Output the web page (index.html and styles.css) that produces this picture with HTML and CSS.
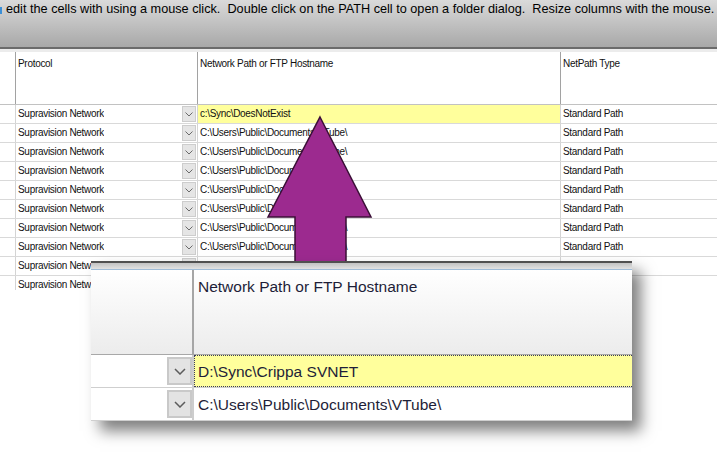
FILE: index.html
```html
<!DOCTYPE html>
<html>
<head>
<meta charset="utf-8">
<link rel="stylesheet" href="styles.css">
</head>
<body>
<div class="banner"><span class="caret"></span><span class="msg">edit the cells with using a mouse click.&nbsp; Double click on the PATH cell to open a folder dialog.&nbsp; Resize columns with the mouse.</span></div>
<div class="rule"></div>
<div class="grid">
  <div class="row head">
    <div class="c c0"></div><div class="c c1">Protocol</div><div class="c c2">Network Path or FTP Hostname</div><div class="c c3">NetPath Type</div>
  </div>
  <div class="row"><div class="c c0"></div><div class="c c1"><span class="t">Supravision Network</span><span class="dd"><svg width="8" height="5" viewBox="0 0 8 5"><path d="M0.5 0.5 L4 4 L7.5 0.5" fill="none" stroke="#6a6a6a" stroke-width="1"/></svg></span></div><div class="c c2 sel">c:\Sync\DoesNotExist</div><div class="c c3">Standard Path</div></div>
  <div class="row"><div class="c c0"></div><div class="c c1"><span class="t">Supravision Network</span><span class="dd"><svg width="8" height="5" viewBox="0 0 8 5"><path d="M0.5 0.5 L4 4 L7.5 0.5" fill="none" stroke="#6a6a6a" stroke-width="1"/></svg></span></div><div class="c c2">C:\Users\Public\Documents\VTube\</div><div class="c c3">Standard Path</div></div>
  <div class="row"><div class="c c0"></div><div class="c c1"><span class="t">Supravision Network</span><span class="dd"><svg width="8" height="5" viewBox="0 0 8 5"><path d="M0.5 0.5 L4 4 L7.5 0.5" fill="none" stroke="#6a6a6a" stroke-width="1"/></svg></span></div><div class="c c2">C:\Users\Public\Documents\VTube\</div><div class="c c3">Standard Path</div></div>
  <div class="row"><div class="c c0"></div><div class="c c1"><span class="t">Supravision Network</span><span class="dd"><svg width="8" height="5" viewBox="0 0 8 5"><path d="M0.5 0.5 L4 4 L7.5 0.5" fill="none" stroke="#6a6a6a" stroke-width="1"/></svg></span></div><div class="c c2">C:\Users\Public\Documents\VTube\</div><div class="c c3">Standard Path</div></div>
  <div class="row"><div class="c c0"></div><div class="c c1"><span class="t">Supravision Network</span><span class="dd"><svg width="8" height="5" viewBox="0 0 8 5"><path d="M0.5 0.5 L4 4 L7.5 0.5" fill="none" stroke="#6a6a6a" stroke-width="1"/></svg></span></div><div class="c c2">C:\Users\Public\Documents\VTube\</div><div class="c c3">Standard Path</div></div>
  <div class="row"><div class="c c0"></div><div class="c c1"><span class="t">Supravision Network</span><span class="dd"><svg width="8" height="5" viewBox="0 0 8 5"><path d="M0.5 0.5 L4 4 L7.5 0.5" fill="none" stroke="#6a6a6a" stroke-width="1"/></svg></span></div><div class="c c2">C:\Users\Public\Documents\VTube\</div><div class="c c3">Standard Path</div></div>
  <div class="row"><div class="c c0"></div><div class="c c1"><span class="t">Supravision Network</span><span class="dd"><svg width="8" height="5" viewBox="0 0 8 5"><path d="M0.5 0.5 L4 4 L7.5 0.5" fill="none" stroke="#6a6a6a" stroke-width="1"/></svg></span></div><div class="c c2">C:\Users\Public\Documents\VTube\</div><div class="c c3">Standard Path</div></div>
  <div class="row"><div class="c c0"></div><div class="c c1"><span class="t">Supravision Network</span><span class="dd"><svg width="8" height="5" viewBox="0 0 8 5"><path d="M0.5 0.5 L4 4 L7.5 0.5" fill="none" stroke="#6a6a6a" stroke-width="1"/></svg></span></div><div class="c c2">C:\Users\Public\Documents\VTube\</div><div class="c c3">Standard Path</div></div>
  <div class="row"><div class="c c0"></div><div class="c c1"><span class="t">Supravision Network</span><span class="dd"><svg width="8" height="5" viewBox="0 0 8 5"><path d="M0.5 0.5 L4 4 L7.5 0.5" fill="none" stroke="#6a6a6a" stroke-width="1"/></svg></span></div><div class="c c2"></div><div class="c c3"></div></div>
  <div class="row"><div class="c c0"></div><div class="c c1"><span class="t">Supravision Network</span><span class="dd"><svg width="8" height="5" viewBox="0 0 8 5"><path d="M0.5 0.5 L4 4 L7.5 0.5" fill="none" stroke="#6a6a6a" stroke-width="1"/></svg></span></div><div class="c c2"></div><div class="c c3"></div></div>
</div>

<svg class="arrow" width="108" height="150" viewBox="0 0 108 150">
  <polygon points="54,2 105,102 80,102 80,148 29,148 29,102 2,102" fill="#9c2a8f" stroke="#3a0f36" stroke-width="1.5" stroke-linejoin="miter"/>
</svg>

<div class="zoom">
  <div class="z-top"></div>
  <div class="z-band"></div>
  <div class="z-blue"></div>
  <div class="z-head">
    <div class="z0"></div>
    <div class="z1">Network Path or FTP Hostname</div>
  </div>
  <div class="z-row">
    <div class="z0"><span class="zdd"><svg width="12" height="7" viewBox="0 0 12 7"><path d="M1 1 L6 6 L11 1" fill="none" stroke="#5c5c5c" stroke-width="1.5"/></svg></span></div>
    <div class="z1 zsel">D:\Sync\Crippa SVNET</div>
  </div>
  <div class="z-row">
    <div class="z0"><span class="zdd"><svg width="12" height="7" viewBox="0 0 12 7"><path d="M1 1 L6 6 L11 1" fill="none" stroke="#5c5c5c" stroke-width="1.5"/></svg></span></div>
    <div class="z1">C:\Users\Public\Documents\VTube\</div>
  </div>
</div>
</body>
</html>
```

FILE: styles.css
```css
* { box-sizing: border-box; }

body {
  margin: 0;
  width: 717px;
  height: 464px;
  overflow: hidden;
  background: #ffffff;
  font-family: "Liberation Sans", Arial, sans-serif;
  color: #111;
  position: relative;
}

.banner {
  height: 47px;
  background: linear-gradient(#dadada, #a8a8a8);
  padding: 1px 0 0 6px;
  font-size: 12.7px;
  line-height: 16px;
  white-space: nowrap;
  color: #000;
  position: relative;
}

.caret {
  position: absolute;
  left: 0;
  top: 7px;
  width: 2px;
  height: 7px;
  background: #3b8fd6;
}

.rule {
  height: 2px;
  background: #6b6b6b;
}

.grid {
  height: 241px;
  overflow: hidden;
  border-top: 3px solid #ececec;
}

.row {
  display: flex;
  height: 19px;
  border-bottom: 1px solid #d9d9d9;
  font-size: 10px;
  letter-spacing: -0.3px;
  line-height: 18px;
}

.row.head {
  height: 53px;
  border-bottom: 1px solid #c2c2c2;
}

.c {
  border-right: 1px solid #d4d4d4;
  padding-left: 2px;
  overflow: hidden;
  white-space: nowrap;
}

.head .c {
  border-right-color: #a2a2a2;
  padding-top: 5px;
  line-height: 14px;
}

.c0 { width: 16px; padding-left: 0; }
.c1 {
  width: 182px;
  display: flex;
  align-items: center;
  justify-content: space-between;
  padding-right: 1px;
}
.head .c1 { display: block; }
.c2 { width: 363px; }
.c3 { flex: 1; border-right: none; }

.t { overflow: hidden; white-space: nowrap; }

.dd {
  flex: none;
  width: 14px;
  height: 16px;
  background: #e5e5e5;
  border: 1px solid #cdcdcd;
  display: flex;
  align-items: center;
  justify-content: center;
}

.sel { background: #ffff9c; }

.arrow {
  position: absolute;
  left: 266px;
  top: 115px;
}

.zoom {
  position: absolute;
  left: 91px;
  top: 261px;
  width: 541px;
  height: 160px;
  background: #fff;
  box-shadow: 9px 10px 14px rgba(0, 0, 0, 0.5);
  font-size: 15.5px;
  color: #1e1e38;
}

.z-top { height: 2px; background: #505050; }
.z-band { height: 6px; background: linear-gradient(#c2c2c2, #e2e2e2); }
.z-blue { height: 1px; background: #9fbcd8; }

.z-head {
  height: 85px;
  display: flex;
  border-bottom: 1px solid #a8a8a8;
  background: linear-gradient(#ffffff, #ececec);
}

.z0 {
  width: 103px;
  border-right: 2px solid #a6a6a6;
}

.z1 {
  flex: 1;
  padding: 8px 0 0 4px;
  line-height: 18px;
  white-space: nowrap;
}

.z-row {
  height: 33px;
  display: flex;
  border-bottom: 1px solid #cfcfcf;
}

.z-row .z0 {
  border-right-color: #cdcdcd;
  display: flex;
  align-items: center;
  justify-content: flex-end;
}

.z-row .z1 {
  padding: 1px 0 0 4px;
  line-height: 32px;
}

.zdd {
  width: 25px;
  height: 28px;
  background: #e3e3e3;
  border: 2px solid #c9c9c9;
  display: flex;
  align-items: center;
  justify-content: center;
}

.zsel {
  background: #ffff9c;
  border-top: 1px dotted #3a3a5a;
  border-bottom: 1px dotted #3a3a5a;
  border-left: 1px dotted #3a3a5a;
}

.z-row .zsel {
  padding: 1px 0 0 3px;
  line-height: 30px;
}
```
